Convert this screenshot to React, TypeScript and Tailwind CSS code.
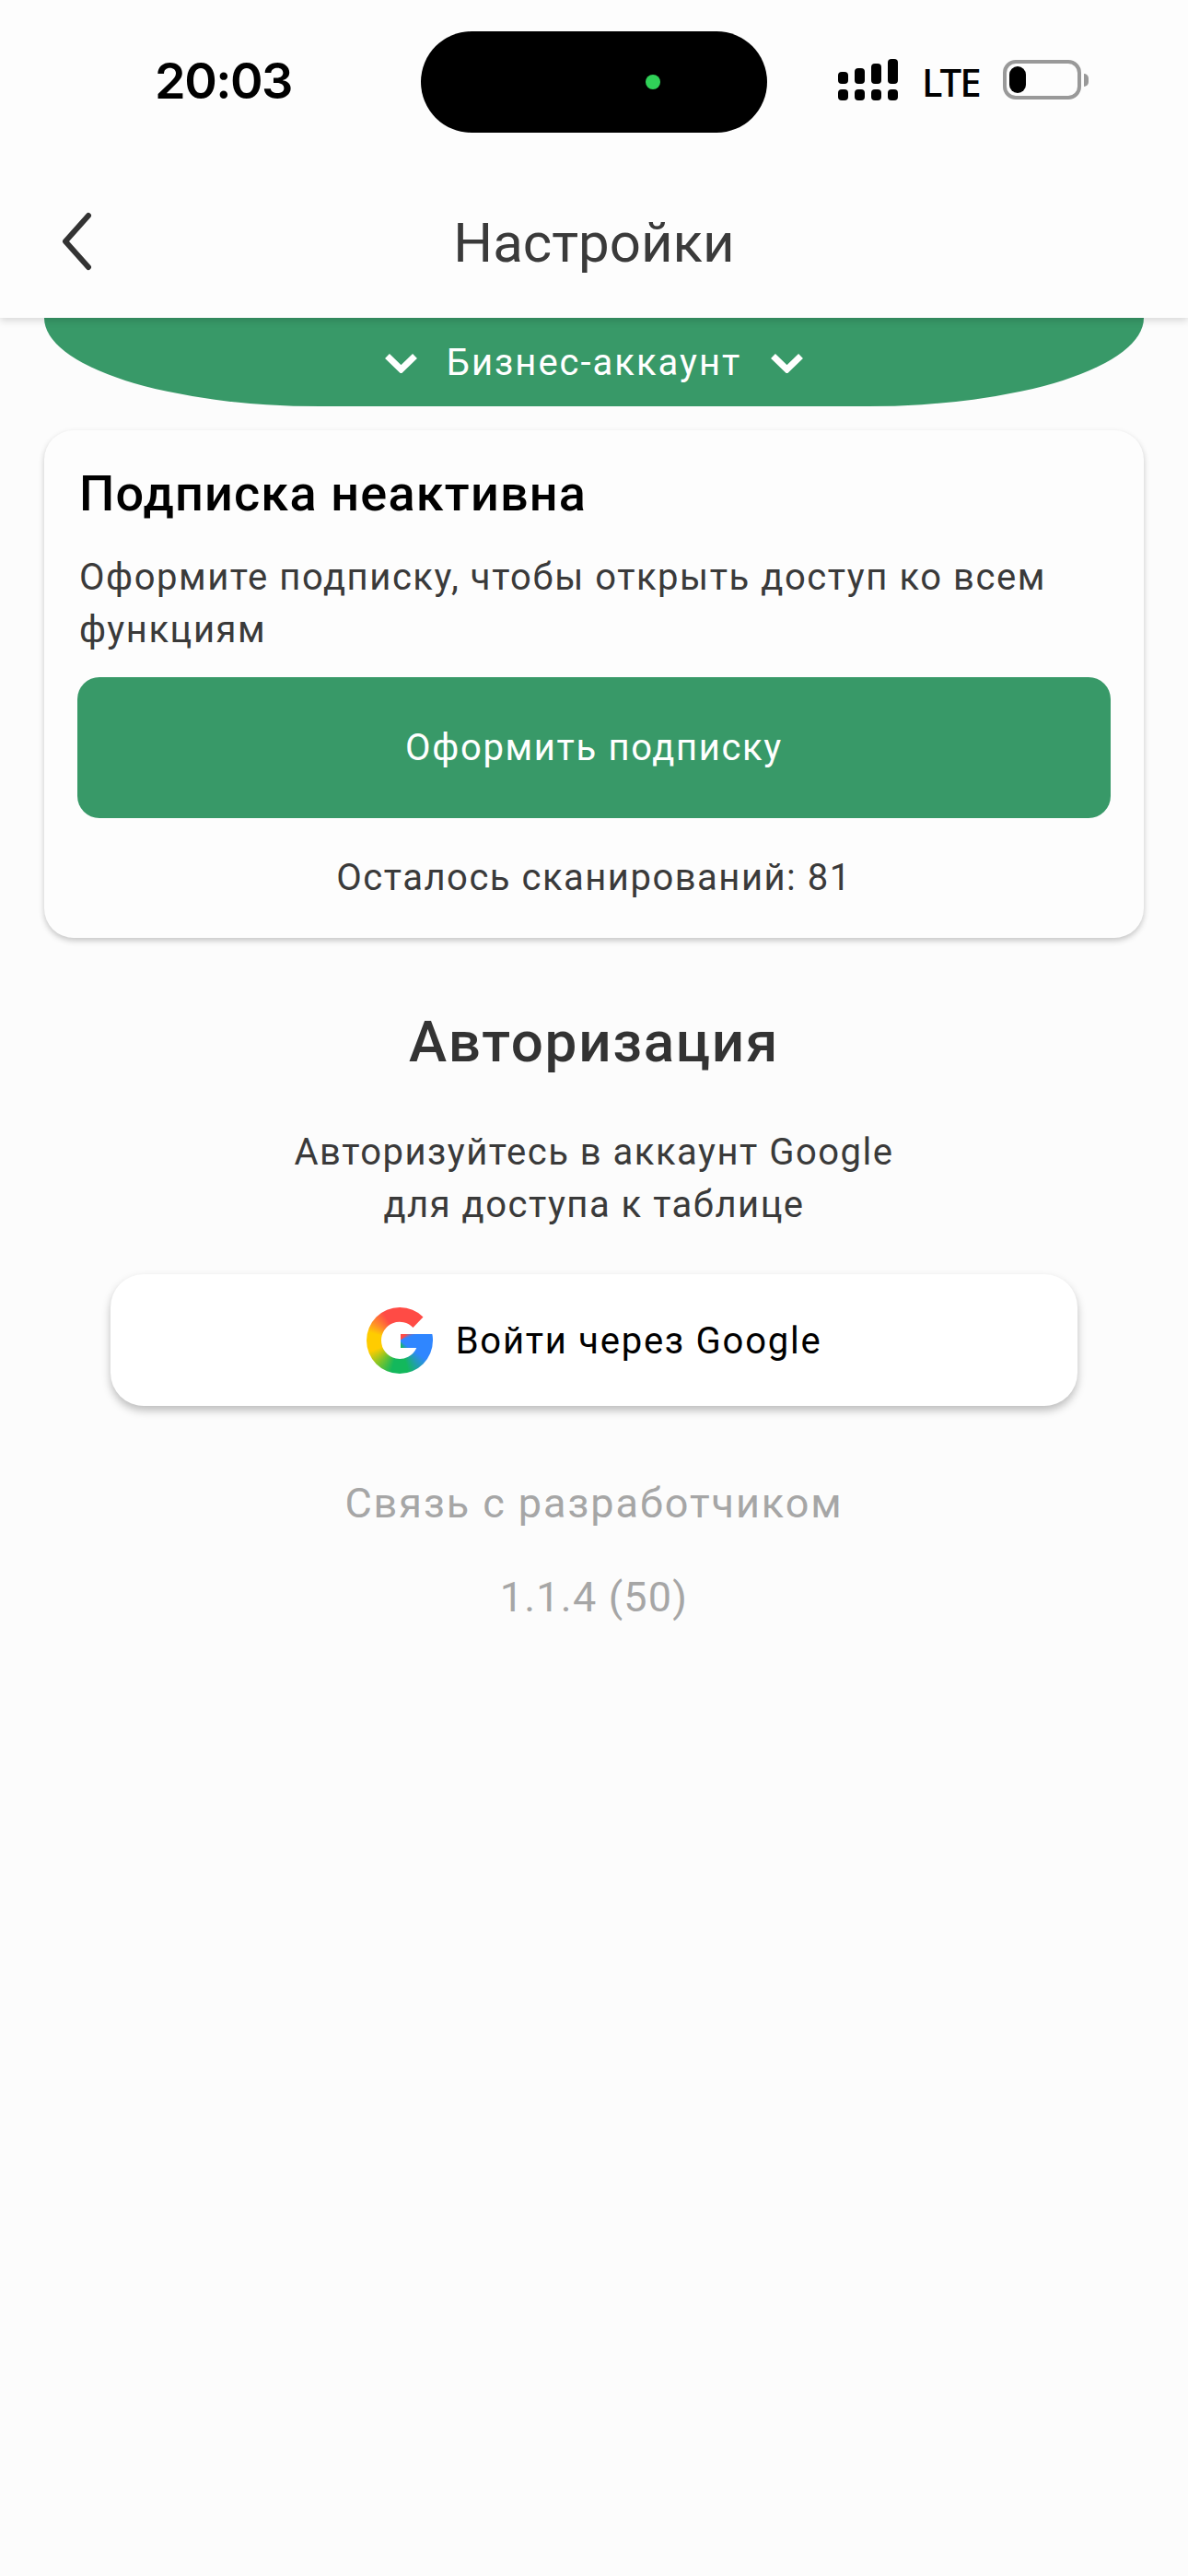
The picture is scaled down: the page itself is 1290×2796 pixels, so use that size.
function SignalBars() {
  const heights = ["h-[13px]", "h-[17px]", "h-[22px]", "h-[27px]"];
  return (
    <div className="flex gap-[7px] items-end">
      {heights.map((h, i) => (
        <div key={i} className="flex flex-col gap-[6px] items-center">
          <div className={`w-[11px] ${h} rounded-[4px] bg-black`} />
          <div className="w-[11px] h-[12px] rounded-[4px] bg-black" />
        </div>
      ))}
    </div>
  );
}

function Battery() {
  return (
    <div className="flex items-center">
      <div className="w-[85px] h-[43px] rounded-[14px] border-[4px] border-[#999999] p-[3px] flex">
        <div className="w-[18px] h-full rounded-[9px] bg-black" />
      </div>
      <div className="w-[5px] h-[14px] rounded-r-[5px] bg-[#999999] ml-[3px]" />
    </div>
  );
}

function StatusBar() {
  return (
    <div className="h-[178px] grid grid-cols-[457px_376px_1fr]">
      <div className="pl-[168px] pt-[56px] font-['Inter',sans-serif] font-semibold text-[54px] leading-[64px] tracking-[-1.5px] text-black">
        20:03
      </div>
      <div className="mt-[34px] h-[110px] rounded-[55px] bg-black flex items-center pl-[244px]">
        <div className="w-[16px] h-[16px] rounded-full bg-[#30d158]" />
      </div>
      <div className="pl-[77px] pt-[64px] flex items-start">
        <SignalBars />
        <div className="ml-[26px] mt-[2px] font-['Noto_Sans',sans-serif] font-medium text-[42px] leading-[46px] tracking-[-2px] text-black">
          LTE
        </div>
        <div className="ml-[25px] mt-[1px]">
          <Battery />
        </div>
      </div>
    </div>
  );
}

function GoogleLogo() {
  return (
    <svg viewBox="0 0 72 72" className="w-[72px] h-[72px]">
      <defs>
        <clipPath id="googleG">
          <path d="M36 0A36 36 0 0 1 61.5 10.5L50.5 22A20 20 0 0 0 16 36A20 20 0 0 0 54.3 44L37 44L37 29L71.3 29C72 32 72 34 72 36A36 36 0 0 1 36 72A36 36 0 0 1 0 36A36 36 0 0 1 36 0Z" />
        </clipPath>
      </defs>
      <g clipPath="url(#googleG)">
        <foreignObject x="0" y="0" width="72" height="72">
          <div className="w-full h-full bg-[conic-gradient(#ff4b45_0deg,#ff4b45_45deg,#2f86ff_70deg,#2f86ff_125deg,#13b85c_165deg,#13b85c_195deg,#7cc42a_222deg,#ffcc00_250deg,#ffcc00_285deg,#ff8c2a_305deg,#ff4b45_330deg,#ff4b45_360deg)]" />
        </foreignObject>
      </g>
    </svg>
  );
}

function SmallChevron() {
  return (
    <svg viewBox="0 0 35 21" className="w-[35px] h-[21px] text-white" fill="none" stroke="currentColor" strokeWidth={7}>
      <path d="M2.5 2.5L17.5 17L32.5 2.5" />
    </svg>
  );
}

export default function App() {
  return (
    <div className="w-[1290px] h-[2796px] bg-[#fcfcfc] font-['Roboto',sans-serif] overflow-hidden">
      <div className="relative z-10 h-[345px] bg-[#fdfdfd] shadow-[0_3px_8px_rgba(0,0,0,0.15)]">
        <StatusBar />
        <div className="h-[167px] grid grid-cols-[1fr_auto_1fr] items-center">
          <svg viewBox="0 0 42 66" className="ml-[62px] w-[42px] h-[66px] text-[#333333]" fill="none" stroke="currentColor" strokeWidth={6} strokeLinecap="round" strokeLinejoin="round">
            <path d="M34 5L9 33L34 61" />
          </svg>
          <h1 className="pt-[5px] text-[60px] leading-[72px] text-[#3a3a3a]">Настройки</h1>
          <div />
        </div>
      </div>

      <div className="mx-[48px] h-[96px] bg-[#389968] rounded-b-[300px_96px] flex items-center justify-center gap-[32px] pt-[2px]">
        <SmallChevron />
        <span className="text-[40px] leading-[46px] text-white tracking-[2px]">Бизнес-аккаунт</span>
        <SmallChevron />
      </div>

      <div className="mx-[48px] mt-[26px] h-[551px] rounded-[32px] bg-[#fdfdfd] shadow-[0_3px_6px_rgba(0,0,0,0.22)] px-[36px] pt-[41px]">
        <h2 className="text-[54px] leading-[56px] font-medium text-black tracking-[1.2px] pl-[2px]">Подписка неактивна</h2>
        <p className="mt-[34px] text-[40px] leading-[57px] text-[#3a3a3a] tracking-[1.55px] pl-[2px]">
          Оформите подписку, чтобы открыть доступ ко всем функциям
        </p>
        <button className="block mt-[23px] w-full h-[153px] rounded-[24px] bg-[#389968] text-white text-[40px] tracking-[1.65px]">
          Оформить подписку
        </button>
        <p className="mt-[42px] text-center text-[40px] leading-[46px] text-[#3a3a3a] tracking-[1.5px]">
          Осталось сканирований: 81
        </p>
      </div>

      <div className="flex flex-col items-center">
        <h2 className="mt-[79px] text-[62px] leading-[68px] font-medium text-[#333333] tracking-[1.7px]">Авторизация</h2>
        <p className="mt-[57px] text-center text-[40px] leading-[57px] text-[#3a3a3a] tracking-[1.5px]">
          Авторизуйтесь в аккаунт Google
          <br />
          для доступа к таблице
        </p>
        <button className="mt-[47px] w-[1050px] h-[143px] rounded-[36px] bg-white shadow-[0_5px_10px_rgba(0,0,0,0.25)] flex items-center justify-center gap-[25px]">
          <GoogleLogo />
          <span className="text-[40px] leading-[48px] text-black tracking-[1.75px] pt-[3px]">Войти через Google</span>
        </button>
        <p className="mt-[81px] text-[45px] leading-[50px] text-[#a6a6a6] tracking-[1.95px]">Связь с разработчиком</p>
        <p className="mt-[52px] text-[45px] leading-[50px] text-[#a6a6a6] tracking-[1.2px]">1.1.4 (50)</p>
      </div>
    </div>
  );
}
